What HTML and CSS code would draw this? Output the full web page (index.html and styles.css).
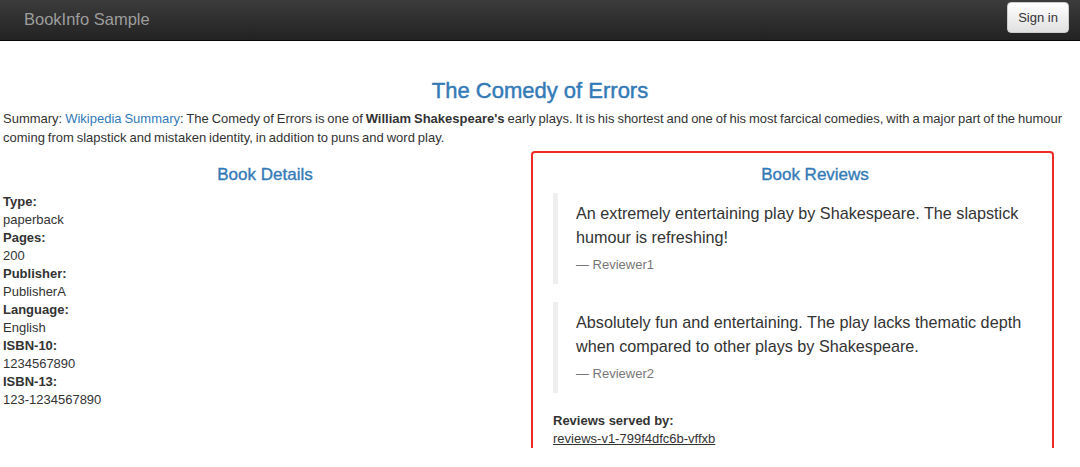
FILE: index.html
```html
<!DOCTYPE html>
<html lang="en">
<head>
  <meta charset="UTF-8" />
  <title>BookInfo Sample</title>
  <link rel="stylesheet" href="styles.css">
</head>
<body>

<!-- Top bar -->
<nav class="navbar">
  <span class="brand">BookInfo Sample</span>
  <button class="signin">Sign in</button>
</nav>

<main class="page">
  <h3 class="title">The Comedy of Errors</h3>
  <p class="summary">Summary: <a href="#">Wikipedia Summary</a>: The Comedy of Errors is one of <b>William Shakespeare's</b> early plays. It is his shortest and one of his most farcical comedies, with a major part of the humour coming from slapstick and mistaken identity, in addition to puns and word play.</p>

  <div class="row">
    <!-- Details -->
    <section class="col">
      <h4 class="col-title">Book Details</h4>
      <dl class="facts">
        <dt>Type:</dt><dd>paperback</dd>
        <dt>Pages:</dt><dd>200</dd>
        <dt>Publisher:</dt><dd>PublisherA</dd>
        <dt>Language:</dt><dd>English</dd>
        <dt>ISBN-10:</dt><dd>1234567890</dd>
        <dt>ISBN-13:</dt><dd>123-1234567890</dd>
      </dl>
    </section>

    <!-- Reviews -->
    <section class="col reviews">
      <div class="highlight"></div>
      <h4 class="col-title">Book Reviews</h4>
      <blockquote class="review">
        <p>An extremely entertaining play by Shakespeare. The slapstick humour is refreshing!</p>
        <footer>&mdash; Reviewer1</footer>
      </blockquote>
      <blockquote class="review">
        <p>Absolutely fun and entertaining. The play lacks thematic depth when compared to other plays by Shakespeare.</p>
        <footer>&mdash; Reviewer2</footer>
      </blockquote>
      <dl class="facts served">
        <dt>Reviews served by:</dt>
        <dd><a href="#">reviews-v1-799f4dfc6b-vffxb</a></dd>
      </dl>
    </section>
  </div>
</main>

</body>
</html>
```

FILE: styles.css
```css
body {
  margin: 0;
  background: #fff;
  color: #333;
  font-family: 'Liberation Sans', Arial, sans-serif;
  font-size: 13px;
  line-height: 18px;
}

a {
  color: #337ab7;
  text-decoration: none;
}

.navbar {
  display: flex;
  align-items: center;
  justify-content: space-between;
  height: 40px;
  padding: 0 11px 0 24px;
  background: linear-gradient(to bottom, #3c3c3c 0, #222 100%);
  border-bottom: 1px solid #080808;
}

.brand {
  color: #9d9d9d;
  font-size: 16.5px;
  margin-top: -3px;
}

.signin {
  height: 31px;
  width: 62px;
  margin-top: -5px;
  padding: 0;
  font-family: 'Liberation Sans', Arial, sans-serif;
  font-size: 13px;
  color: #333;
  background: linear-gradient(to bottom, #fff 0, #e0e0e0 100%);
  border: 1px solid #ccc;
  border-radius: 4px;
}

.page {
  padding: 0 3px;
}

.title {
  margin: 37px 0 5px;
  text-align: center;
  color: #337ab7;
  font-size: 22px;
  font-weight: normal;
  line-height: 26px;
  -webkit-text-stroke: 0.45px #337ab7;
}

.summary {
  margin: 0;
  line-height: 19px;
  word-spacing: -0.7px;
}

.row {
  display: grid;
  grid-template-columns: 1fr 1fr;
  column-gap: 26px;
  margin-top: 18px;
}

.col-title {
  margin: 0 0 9px;
  text-align: center;
  color: #337ab7;
  font-size: 17px;
  font-weight: normal;
  line-height: 19px;
  -webkit-text-stroke: 0.35px #337ab7;
}

.facts {
  margin: 0;
}

.facts dt {
  font-weight: bold;
}

.facts dd {
  margin: 0;
}

.reviews {
  position: relative;
}

/* red annotation frame drawn over the reviews column */
.highlight {
  position: absolute;
  top: -14px;
  bottom: -10px;
  left: -22px;
  right: 23px;
  border: 2px solid #ee2b24;
  border-radius: 4px;
  pointer-events: none;
}

.review {
  margin: 0 0 18px;
  padding: 8px 20px 10px 18px;
  border-left: 5px solid #eee;
}

.review p {
  margin: 0;
  font-size: 16.2px;
  line-height: 24px;
}

.review footer {
  margin-top: 7px;
  color: #777;
  font-size: 13px;
  line-height: 18px;
}

.served {
  margin-top: 19px;
}

.served a {
  color: #333;
  text-decoration: underline;
}
```
